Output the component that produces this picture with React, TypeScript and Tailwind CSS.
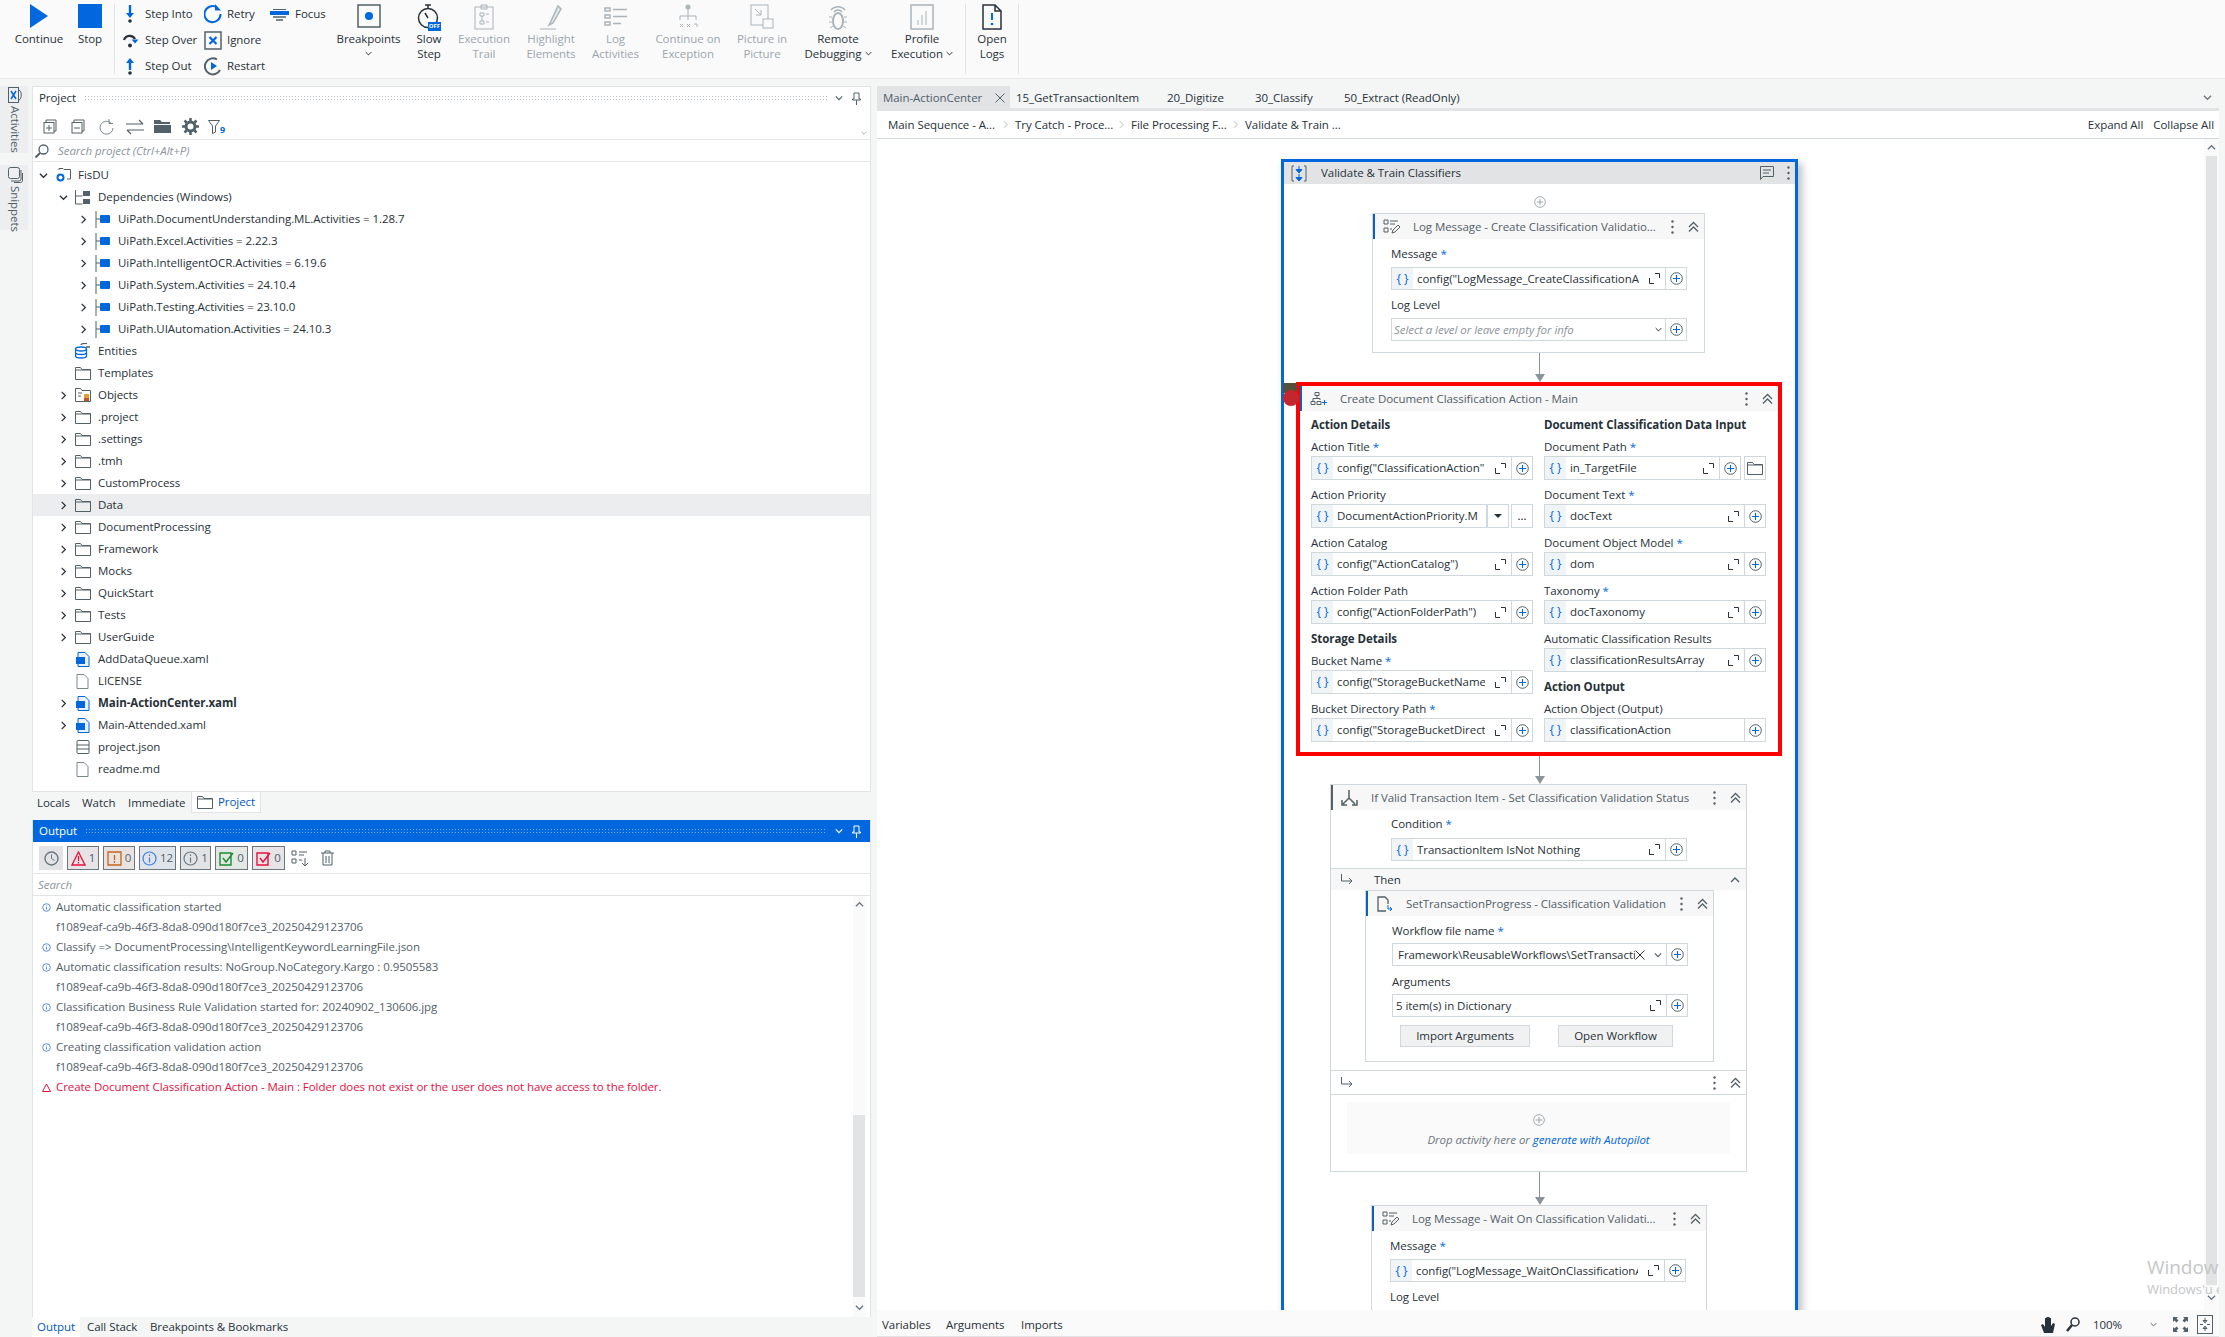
import type { ReactNode } from "react";

const DARK = "#273139";
const BLUE = "#0067df";
const DIS = "#a9b4bb";

function I({ w = 24, h = 24, vb = "0 0 24 24", children, className = "" }: { w?: number; h?: number; vb?: string; children: ReactNode; className?: string }) {
  return (
    <svg width={w} height={h} viewBox={vb} fill="none" className={"shrink-0 " + className}>
      {children}
    </svg>
  );
}

const Chevron = ({ dir = "down", size = 8, color = "#526069" }: { dir?: "down" | "right" | "up"; size?: number; color?: string }) => (
  <I w={size} h={size} vb="0 0 10 10">
    <path d={dir === "down" ? "M1 3l4 4 4-4" : dir === "up" ? "M1 7l4-4 4 4" : "M3 1l4 4-4 4"} stroke={color} strokeWidth="1.4" />
  </I>
);

const DoubleUp = () => (
  <I w={11} h={12} vb="0 0 11 12">
    <path d="M1 6l4.500-4.500L10 6M1 10.500L5.500 6l4.500 4.500" stroke="#526069" strokeWidth="1.3" />
  </I>
);

const Dots = () => (
  <I w={3} h={14} vb="0 0 3 14">
    <circle cx="1.500" cy="1.500" r="1.200" fill="#526069" />
    <circle cx="1.500" cy="7" r="1.200" fill="#526069" />
    <circle cx="1.500" cy="12.500" r="1.200" fill="#526069" />
  </I>
);

const PlusCircle = ({ size = 13, plus = BLUE, ring = "#526069" }: { size?: number; plus?: string; ring?: string }) => (
  <I w={size} h={size} vb="0 0 13 13">
    <circle cx="6.500" cy="6.500" r="5.800" stroke={ring} />
    <path d="M6.500 3v7M3 6.500h7" stroke={plus} strokeWidth="1.100" />
  </I>
);

const Expand = () => (
  <I w={11} h={11} vb="0 0 11 11">
    <path d="M.5 5v5.500H5M6 .5h4.500V5" stroke={DARK} />
  </I>
);

const Folder = ({ w = 16, h = 13 }: { w?: number; h?: number }) => (
  <I w={w} h={h} vb="0 0 16 13">
    <path d="M.5 12.500V.5h5l1.500 2h8.500v10z" stroke="#526069" />
    <path d="M.5 3h15" stroke="#526069" />
  </I>
);

const LogIcon = () => (
  <I w={17} h={15} vb="0 0 17 15">
    <path d="M1 1h4v4H1zM1 9h4v4H1zM7 2h8M7 5h5M7 10h2" stroke="#526069" />
    <path d="M9 14l1-3 5-5 2 2-5 5z" stroke="#526069" />
  </I>
);

/* Inputs */
function Braces() {
  return <span className="flex h-full w-[21px] shrink-0 items-center justify-center bg-[#f1f4f6] text-[12px] text-[#0067df]">{"{ }"}</span>;
}

function PlusCell() {
  return (
    <span className="flex h-full w-[21px] shrink-0 items-center justify-center border-l border-[#cfd8dd]">
      <PlusCircle />
    </span>
  );
}

function ExprInput({ value, expand = true, className = "" }: { value: string; expand?: boolean; className?: string }) {
  return (
    <div className={"flex h-[24px] items-center border border-[#cfd8dd] bg-white " + className}>
      <Braces />
      <span className="min-w-0 flex-1 overflow-hidden whitespace-nowrap pl-[4px] text-[#273139]">{value}</span>
      {expand && (
        <span className="flex w-[26px] shrink-0 justify-center pl-[5px]">
          <Expand />
        </span>
      )}
      <PlusCell />
    </div>
  );
}

function Label({ text, req }: { text: string; req?: boolean }) {
  return (
    <div className="flex h-[24px] items-end pb-[1px] leading-[16px] text-[#273139]">
      {text}
      {req && <span className="ml-[3px] text-[#0067df]">*</span>}
    </div>
  );
}

function Field({ label, req, value, expand }: { label: string; req?: boolean; value: string; expand?: boolean }) {
  return (
    <div>
      <Label text={label} req={req} />
      <ExprInput value={value} expand={expand} />
    </div>
  );
}

const Heading = ({ text, first }: { text: string; first?: boolean }) => (
  <div className={"font-bold leading-[16px] text-[#273139] " + (first ? "h-[21px] pt-[6px]" : "h-[22px] pt-[7px]")}>{text}</div>
);

function ActivityHeader({ icon, title, border = "border-[#0f5fbf]", dots = true }: { icon?: ReactNode; title: string; border?: string; dots?: boolean }) {
  return (
    <div className={"flex h-[25px] shrink-0 items-center border-l-2 bg-[#f7f7f7] " + border}>
      <span className="flex w-[32px] shrink-0 justify-center">{icon}</span>
      <span className="ml-[6px] min-w-0 flex-1 overflow-hidden whitespace-nowrap text-[#526069]">{title}</span>
      {dots && (
        <span className="flex w-[21px] shrink-0 justify-center">
          <Dots />
        </span>
      )}
      <span className="flex w-[21px] shrink-0 justify-center">
        <DoubleUp />
      </span>
    </div>
  );
}

function Connector({ h }: { h: string }) {
  return (
    <div className={"flex flex-col items-center " + h}>
      <div className="w-px flex-1 bg-[#8a949b]" />
      <div className="h-0 w-0 border-x-[5px] border-t-[8px] border-x-transparent border-t-[#8a949b]" />
    </div>
  );
}

/* Ribbon */
function Big({ w, icon, lines, dis, chevron }: { w: string; icon: ReactNode; lines: string[]; dis?: boolean; chevron?: "inline" | "below" }) {
  return (
    <div className={"flex shrink-0 flex-col items-center " + w + (dis ? " text-[#9aa6ad]" : " text-[#273139]")}>
      <div className="flex h-[31px] items-start pt-[4px]">{icon}</div>
      {lines.map((l, i) => (
        <div key={l} className="flex items-center gap-[3px] whitespace-nowrap leading-[15px]">
          {l}
          {chevron === "inline" && i === lines.length - 1 && <Chevron size={7} color={DARK} />}
        </div>
      ))}
      {chevron === "below" && (
        <div className="flex h-[15px] items-center">
          <Chevron size={7} color={DARK} />
        </div>
      )}
    </div>
  );
}

function Small({ icon, label, gap = "ml-[6px]", w = "w-[18px]" }: { icon: ReactNode; label: string; gap?: string; w?: string }) {
  return (
    <div className="flex h-[26px] items-center whitespace-nowrap text-[#273139]">
      <span className={"flex justify-center " + w}>{icon}</span>
      <span className={gap}>{label}</span>
    </div>
  );
}

const Sep = ({ ml = "" }: { ml?: string }) => <div className={"my-[4px] w-px shrink-0 bg-[#e1e3e5] " + ml} />;

function Ribbon() {
  const retry = (
    <I w={18} h={20} vb="0 0 18 20">
      <path d="M13 3.500A8 8 0 1 0 16.500 10" stroke={BLUE} strokeWidth="2" />
      <path d="M11 0v6.500h6z" fill={BLUE} />
    </I>
  );
  return (
    <div className="flex h-[79px] shrink-0 border-b border-[#e8eaeb] bg-[#fafafa] pl-[12px]">
      <Big
        w="w-[54px]"
        lines={["Continue"]}
        icon={
          <I w={18} h={24} vb="0 0 18 24">
            <path d="M0 0l18 12L0 24z" fill={BLUE} />
          </I>
        }
      />
      <Big w="w-[48px]" lines={["Stop"]} icon={<div className="h-[24px] w-[24px] bg-[#0067df]" />} />
      <Sep />
      <div className="flex w-[221px] shrink-0 pl-[6px] pt-[1px]">
        <div className="w-[83px]">
          <Small
            label="Step Into"
            icon={
              <I w={10} h={18} vb="0 0 10 18">
                <path d="M5 0v9" stroke={BLUE} strokeWidth="2.400" />
                <path d="M1 8h8l-4 5z" fill={BLUE} />
                <circle cx="5" cy="16" r="1.800" fill={DARK} />
              </I>
            }
          />
          <Small
            label="Step Over"
            icon={
              <I w={18} h={16} vb="0 0 18 16">
                <path d="M3 8a6 6 0 0 1 11-1" stroke={DARK} strokeWidth="2.200" />
                <path d="M10.500 7.500h7l-3.500 4z" fill={BLUE} />
                <circle cx="9" cy="13.500" r="2" fill={DARK} />
              </I>
            }
          />
          <Small
            label="Step Out"
            icon={
              <I w={10} h={18} vb="0 0 10 18">
                <path d="M5 5v8" stroke={BLUE} strokeWidth="2.400" />
                <path d="M1 6h8L5 1z" fill={BLUE} />
                <circle cx="5" cy="16" r="1.800" fill={DARK} />
              </I>
            }
          />
        </div>
        <div className="w-[66px]">
          <Small label="Retry" gap="ml-[5px]" icon={retry} />
          <Small
            label="Ignore"
            gap="ml-[5px]"
            icon={
              <I w={18} h={19} vb="0 0 18 19">
                <rect x="1" y="1" width="16" height="17" stroke="#526069" strokeWidth="1.500" />
                <path d="M5.500 6l7 7M12.500 6l-7 7" stroke={BLUE} strokeWidth="2.200" />
              </I>
            }
          />
          <Small
            label="Restart"
            gap="ml-[5px]"
            icon={
              <I w={18} h={20} vb="0 0 18 20">
                <path d="M13 3.500A8 8 0 1 0 16 14" stroke="#526069" strokeWidth="2" />
                <path d="M7 6l6 4-6 4z" fill={BLUE} />
              </I>
            }
          />
        </div>
        <div>
          <Small
            label="Focus"
            w="w-[19px]"
            icon={
              <I w={19} h={13} vb="0 0 19 13">
                <path d="M3 1.500h13" stroke="#526069" />
                <rect x="0" y="3" width="19" height="4" fill={BLUE} />
                <path d="M3 9h13M6 12h7" stroke="#526069" strokeWidth="1.500" />
              </I>
            }
          />
        </div>
      </div>
      <Big
        w="w-[65px]"
        lines={["Breakpoints"]}
        chevron="below"
        icon={
          <I w={24} h={24}>
            <rect x="1" y="1" width="22" height="22" stroke="#526069" strokeWidth="1.500" />
            <circle cx="12" cy="12" r="4" fill={BLUE} />
          </I>
        }
      />
      <Big
        w="w-[56px]"
        lines={["Slow", "Step"]}
        icon={
          <div className="relative h-[27px] w-[24px]">
            <I w={22} h={27} vb="0 0 22 27">
              <path d="M8 1h6M11 1v4" stroke={DARK} strokeWidth="1.500" />
              <circle cx="11" cy="14" r="9.500" stroke={DARK} strokeWidth="1.500" />
              <path d="M11 14l-3-5" stroke={DARK} strokeWidth="1.500" />
            </I>
            <span className="absolute bottom-0 right-0 bg-[#0067df] px-px text-[6px] font-bold leading-[9px] text-white">OFF</span>
          </div>
        }
      />
      <Big
        w="w-[54px]"
        dis
        lines={["Execution", "Trail"]}
        icon={
          <I w={20} h={26} vb="0 0 20 26">
            <rect x="1" y="3" width="18" height="22" stroke={DIS} />
            <path d="M7 1h6v4H7zM6 9h4v3H6zM6 17h4v3H6zM12 10h3M12 18h3M8 12v5" stroke={DIS} />
          </I>
        }
      />
      <Big
        w="w-[80px]"
        dis
        lines={["Highlight", "Elements"]}
        icon={
          <I w={26} h={26} vb="0 0 26 26">
            <path d="M13 17l-2 4 4-2L23 5l-3-3z" stroke={DIS} strokeWidth="1.500" fill="#e3e7e9" />
            <path d="M2 25h16" stroke={DIS} />
          </I>
        }
      />
      <Big
        w="w-[49px]"
        dis
        lines={["Log", "Activities"]}
        icon={
          <I w={24} h={24}>
            <path d="M1 4h5v3H1zM1 11h5v3H1zM1 18h5v3H1zM9 5.500h14M9 12.500h14M9 19.500h8" stroke={DIS} strokeWidth="1.500" />
          </I>
        }
      />
      <Big
        w="w-[96px]"
        dis
        lines={["Continue on", "Exception"]}
        icon={
          <I w={24} h={26} vb="0 0 24 26">
            <circle cx="12" cy="3" r="2.500" fill={DIS} />
            <path d="M12 5v11M4 12h16v4M4 12v4M4 20l3 3M7 20l-3 3M11 20l3 3M14 20l-3 3M18 20h3v3" stroke={DIS} />
          </I>
        }
      />
      <Big
        w="w-[52px]"
        dis
        lines={["Picture in", "Picture"]}
        icon={
          <I w={24} h={26} vb="0 0 24 26">
            <rect x="1" y="1" width="17" height="20" stroke={DIS} />
            <rect x="13" y="15" width="10" height="9" fill="#fafafa" stroke={DIS} />
            <path d="M5 5l6 6M11 6v5H6" stroke={DIS} />
          </I>
        }
      />
      <Big
        w="w-[100px]"
        lines={["Remote", "Debugging"]}
        chevron="inline"
        icon={
          <I w={20} h={27} vb="0 0 20 27">
            <path d="M3 6a9 9 0 0 1 14 0M6 8a5 5 0 0 1 8 0" stroke={DIS} strokeWidth="1.500" />
            <ellipse cx="10" cy="17" rx="5" ry="8" stroke={DIS} strokeWidth="2" />
            <path d="M1 13h3M16 13h3M1 18h3M16 18h3M2 24l3-2M18 24l-3-2" stroke={DIS} />
          </I>
        }
      />
      <Big
        w="w-[68px]"
        lines={["Profile", "Execution"]}
        chevron="inline"
        icon={
          <I w={24} h={26} vb="0 0 24 26">
            <rect x="1" y="1" width="22" height="24" stroke={DIS} strokeWidth="1.500" />
            <path d="M8 21v-5M12 21V11M16 21V7" stroke={DIS} />
          </I>
        }
      />
      <Sep ml="ml-[9px]" />
      <Big
        w="w-[52px]"
        lines={["Open", "Logs"]}
        icon={
          <I w={20} h={26} vb="0 0 20 26">
            <path d="M1 1h12l6 6v18H1zM13 1v6h6" stroke={DARK} strokeWidth="1.500" />
            <path d="M10 9v7" stroke={BLUE} strokeWidth="2" />
            <circle cx="10" cy="20" r="1.300" fill={BLUE} />
          </I>
        }
      />
      <Sep />
    </div>
  );
}

/* Left side */
const deps = [
  "UiPath.DocumentUnderstanding.ML.Activities = 1.28.7",
  "UiPath.Excel.Activities = 2.22.3",
  "UiPath.IntelligentOCR.Activities = 6.19.6",
  "UiPath.System.Activities = 24.10.4",
  "UiPath.Testing.Activities = 23.10.0",
  "UiPath.UIAutomation.Activities = 24.10.3",
];
const folders = [".project", ".settings", ".tmh", "CustomProcess", "Data", "DocumentProcessing", "Framework", "Mocks", "QuickStart", "Tests", "UserGuide"];

const Xaml = () => (
  <I w={14} h={15} vb="0 0 14 15">
    <path d="M2 .5h7l4 4v10H2z" fill="#e8f1fc" stroke="#0067df" />
    <rect x="0" y="5" width="9" height="7" fill={BLUE} />
  </I>
);

const FileIc = () => (
  <I w={13} h={15} vb="0 0 13 15">
    <path d="M1 .5h7l4 4v10H1z" stroke="#7b878f" />
  </I>
);

function TreeRow({ level, open, leaf, icon, text, bold, active }: { level: number; open?: boolean; leaf?: boolean; icon: ReactNode; text: string; bold?: boolean; active?: boolean }) {
  const indent = ["pl-[5px]", "pl-[25px]", "pl-[45px]"][level];
  return (
    <div className={"flex h-[22px] items-center whitespace-nowrap text-[#273139] " + indent + (active ? " bg-[#ebedee]" : "")}>
      <span className="flex w-[10px] justify-center">{!leaf && <Chevron dir={open ? "down" : "right"} size={9} color={DARK} />}</span>
      <span className="ml-[5px] flex w-[19px] justify-center">{icon}</span>
      <span className={"ml-[6px] " + (bold ? "font-bold" : "")}>{text}</span>
    </div>
  );
}

function PanelDots({ light }: { light?: boolean }) {
  return <div className={"mx-[8px] h-[6px] flex-1 bg-size-[3px_3px] " + (light ? "bg-[radial-gradient(#7fb3ef_0.7px,transparent_0.9px)]" : "bg-[radial-gradient(#b9c1c6_0.7px,transparent_0.9px)]")} />;
}

const Pin = ({ color = "#526069" }: { color?: string }) => (
  <I w={9} h={13} vb="0 0 9 13">
    <path d="M2 1h5v6h1.500v1h-8V7H2zM4.500 8v5" stroke={color} />
  </I>
);

function ProjectPanel() {
  return (
    <div className="flex h-[706px] shrink-0 flex-col border border-[#e1e3e5] bg-white">
      <div className="flex h-[24px] shrink-0 items-center pb-[2px] pl-[6px] pr-[9px] text-[#273139]">
        Project
        <PanelDots />
        <Chevron size={8} />
        <span className="ml-[9px]">
          <Pin />
        </span>
      </div>
      <div className="flex h-[29px] shrink-0 items-center border-b border-[#e1e3e5] pl-[10px] pt-[3px]">
        <I w={14} h={15} vb="0 0 14 15" className="mr-[14px]">
          <path d="M3 3V1h10v11h-2" stroke="#526069" />
          <rect x="1" y="3.500" width="10" height="10.500" stroke="#526069" />
          <path d="M6 6v6M3 9h6" stroke="#526069" />
        </I>
        <I w={14} h={15} vb="0 0 14 15" className="mr-[14px]">
          <path d="M3 3V1h10v11h-2" stroke="#526069" />
          <rect x="1" y="3.500" width="10" height="10.500" stroke="#526069" />
          <path d="M3 9h6" stroke="#526069" />
        </I>
        <I w={15} h={16} vb="0 0 15 16" className="mr-[12px]">
          <path d="M12 4A6.500 6.500 0 1 0 14 9" stroke="#7b878f" />
          <path d="M10 0v4.500h4" stroke="#7b878f" />
        </I>
        <I w={18} h={16} vb="0 0 18 16" className="mr-[10px]">
          <path d="M0 5h17M13 1l4 4M18 11H1M5 15l-4-4" stroke="#526069" strokeWidth="1.200" />
        </I>
        <I w={17} h={13} vb="0 0 17 13" className="mr-[11px]">
          <path d="M0 0h6l2 2h8v2H0zM0 5h17v8H0z" fill="#526069" />
        </I>
        <I w={17} h={17} vb="0 0 17 17" className="mr-[9px]">
          <circle cx="8.500" cy="8.500" r="4.500" stroke="#526069" strokeWidth="3" />
          <path d="M8.500 0v3M8.500 14v3M0 8.500h3M14 8.500h3M2.500 2.500l2 2M12.500 12.500l2 2M2.500 14.500l2-2M12.500 4.500l2-2" stroke="#526069" strokeWidth="2.500" />
        </I>
        <I w={12} h={14} vb="0 0 12 14">
          <path d="M.5.500h11L7.500 6v6l-3 1.500V6z" stroke="#526069" />
        </I>
        <span className="mt-[6px] text-[9px] font-bold leading-[10px] text-[#0067df]">9</span>
        <span className="ml-auto mr-[3px] mt-[12px]">
          <Chevron size={6} color="#9aa6ad" />
        </span>
      </div>
      <div className="flex h-[22px] shrink-0 items-center border-b border-[#e1e3e5] pl-[2px] italic text-[#8b959c]">
        <I w={14} h={14} vb="0 0 14 14" className="mr-[9px] scale-x-[-1]">
          <circle cx="5.500" cy="5.500" r="4.500" stroke="#526069" strokeWidth="1.300" />
          <path d="M9 9l4.500 4.500" stroke="#526069" strokeWidth="2" />
        </I>
        Search project (Ctrl+Alt+P)
      </div>
      <div className="flex-1 pt-[2px]">
        <TreeRow
          level={0}
          open
          text="FisDU"
          icon={
            <I w={16} h={15} vb="0 0 16 15">
              <path d="M4 2V.5h4l1 1h6.500V11H12" stroke="#526069" />
              <circle cx="5.500" cy="9.500" r="3" stroke={BLUE} strokeWidth="2" />
            </I>
          }
        />
        <TreeRow
          level={1}
          open
          text="Dependencies (Windows)"
          icon={
            <I w={16} h={15} vb="0 0 16 15">
              <path d="M.5 0v14h7M.5 6h7" stroke="#526069" />
              <rect x="8" y="1" width="7" height="5" fill="#526069" />
              <rect x="8" y="9" width="7" height="5" fill="#526069" />
            </I>
          }
        />
        {deps.map((d) => (
          <TreeRow
            key={d}
            level={2}
            text={d}
            icon={
              <I w={16} h={17} vb="0 0 16 17">
                <path d="M1 0v17M1 8h4" stroke="#526069" />
                <rect x="5" y="4" width="10" height="8" rx="1" fill={BLUE} />
              </I>
            }
          />
        ))}
        <TreeRow
          level={1}
          leaf
          text="Entities"
          icon={
            <I w={16} h={16} vb="0 0 16 16">
              <ellipse cx="6" cy="6" rx="5.500" ry="2" stroke={BLUE} strokeWidth="1.300" />
              <path d="M.5 6v7c0 1 2.500 2 5.500 2s5.500-1 5.500-2V6M.5 9.500c0 1 2.500 2 5.500 2s5.500-1 5.500-2" stroke={BLUE} strokeWidth="1.300" />
              <path d="M6 2c0-1 3-2 6-1.500M11 4h4" stroke="#526069" strokeWidth="1.300" />
            </I>
          }
        />
        <TreeRow level={1} leaf text="Templates" icon={<Folder />} />
        <TreeRow
          level={1}
          text="Objects"
          icon={
            <I w={16} h={14} vb="0 0 16 14">
              <path d="M.5 13.500V.5h5l1.500 2h8.500v11z" stroke="#526069" />
              <path d="M3 5h4M3 8h3" stroke="#526069" />
              <rect x="9" y="6" width="5" height="4" fill="#e0a030" />
              <rect x="9" y="10" width="5" height="3" fill="#c0562a" />
            </I>
          }
        />
        {folders.map((f) => (
          <TreeRow key={f} level={1} text={f} icon={<Folder />} active={f === "Data"} />
        ))}
        <TreeRow level={1} leaf text="AddDataQueue.xaml" icon={<Xaml />} />
        <TreeRow level={1} leaf text="LICENSE" icon={<FileIc />} />
        <TreeRow level={1} text="Main-ActionCenter.xaml" bold icon={<Xaml />} />
        <TreeRow level={1} text="Main-Attended.xaml" icon={<Xaml />} />
        <TreeRow
          level={1}
          leaf
          text="project.json"
          icon={
            <I w={14} h={14} vb="0 0 14 14">
              <rect x="1" y=".5" width="12" height="13" rx="1" stroke="#526069" />
              <path d="M1 5h12M1 9h12" stroke="#526069" />
            </I>
          }
        />
        <TreeRow level={1} leaf text="readme.md" icon={<FileIc />} />
      </div>
    </div>
  );
}

function CountBtn({ count, w, color, bg = "bg-[#dfe3ea]", kind }: { count: string; w: string; color: string; bg?: string; kind: "tri" | "sq" | "i" | "chk" }) {
  return (
    <div className={"mr-[4px] flex h-[24px] items-center justify-center gap-[3px] border border-[#6b7780] text-[#526069] " + w + " " + bg}>
      <I w={15} h={15} vb="0 0 15 15">
        {kind === "tri" && <path d="M7.500 1L14 14H1zM7.500 5v5M7.500 11v1.500" stroke={color} strokeWidth="1.300" />}
        {kind === "sq" && <path d="M1 1h13v13H1zM7.500 4v5M7.500 10v2" stroke={color} strokeWidth="1.300" />}
        {kind === "i" && (
          <g stroke={color} strokeWidth="1.200">
            <circle cx="7.500" cy="7.500" r="6.500" />
            <path d="M7.500 3.500v1.500M7.500 6.500v5" />
          </g>
        )}
        {kind === "chk" && <path d="M1 2h11v12H1zM4 7l3 4 7-9" stroke={color} strokeWidth="1.400" />}
      </I>
      {count}
    </div>
  );
}

const InfoDot = () => (
  <I w={9} h={9} vb="0 0 9 9">
    <circle cx="4.500" cy="4.500" r="3.800" stroke="#5b8fd6" />
    <path d="M4.500 2.500v.8M4.500 4v2.500" stroke="#5b8fd6" />
  </I>
);

const ID = "f1089eaf-ca9b-46f3-8da8-090d180f7ce3_20250429123706";
const logs: [string, boolean][] = [
  ["Automatic classification started", true],
  [ID, false],
  ["Classify => DocumentProcessing\\IntelligentKeywordLearningFile.json", true],
  ["Automatic classification results: NoGroup.NoCategory.Kargo : 0.9505583", true],
  [ID, false],
  ["Classification Business Rule Validation started for: 20240902_130606.jpg", true],
  [ID, false],
  ["Creating classification validation action", true],
  [ID, false],
];

function OutputPanel() {
  return (
    <div className="flex h-[497px] shrink-0 flex-col border-x border-[#e1e3e5] bg-white">
      <div className="flex h-[22px] shrink-0 items-center bg-[#0067df] pl-[6px] pr-[9px] text-white">
        Output
        <PanelDots light />
        <Chevron size={8} color="#ffffff" />
        <span className="ml-[9px]">
          <Pin color="#ffffff" />
        </span>
      </div>
      <div className="flex h-[32px] shrink-0 items-center border-b border-[#e1e3e5] pl-[6px] pt-[1px]">
        <div className="mr-[4px] flex h-[24px] w-[24px] items-center justify-center bg-[#e1e3e5]">
          <I w={15} h={15} vb="0 0 15 15">
            <circle cx="7.500" cy="7.500" r="6.500" stroke="#6b7780" strokeWidth="1.400" />
            <path d="M7.500 3.500v4l3 2" stroke="#6b7780" />
          </I>
        </div>
        <CountBtn w="w-[32px]" count="1" color="#e6103f" bg="bg-[#e8e3e6]" kind="tri" />
        <CountBtn w="w-[32px]" count="0" color="#c8641e" bg="bg-[#e8e3e0]" kind="sq" />
        <CountBtn w="w-[37px]" count="12" color="#3d7fe0" kind="i" />
        <CountBtn w="w-[31px]" count="1" color="#6b7780" bg="bg-[#e1e3e5]" kind="i" />
        <CountBtn w="w-[33px]" count="0" color="#1b8a2f" bg="bg-[#e3e8e4]" kind="chk" />
        <CountBtn w="w-[33px]" count="0" color="#e6103f" bg="bg-[#e8e3e6]" kind="chk" />
        <I w={17} h={17} vb="0 0 17 17" className="ml-[2px]">
          <path d="M1 1h4v4H1zM1 9h4v4H1zM8 2h8M8 5h5M8 10h3M14 8v8M11 13l3 3 3-3" stroke="#526069" />
        </I>
        <I w={13} h={16} vb="0 0 13 16" className="ml-[13px]">
          <path d="M0 3h13M4 3V1h5v2M2 3v12h9V3M5 6v7M8 6v7" stroke="#526069" />
        </I>
      </div>
      <div className="flex h-[22px] shrink-0 items-center border-b border-[#e1e3e5] pl-[5px] italic text-[#8b959c]">Search</div>
      <div className="flex min-h-0 flex-1">
        <div className="flex-1 pl-[9px] pt-[1px] leading-[20px] text-[#526069]">
          {logs.map(([t, icon], i) => (
            <div key={i} className="flex h-[20px] items-center whitespace-nowrap">
              <span className="flex w-[14px] shrink-0">{icon && <InfoDot />}</span>
              {t}
            </div>
          ))}
          <div className="flex h-[20px] items-center whitespace-nowrap text-[#e6103f]">
            <span className="flex w-[14px] shrink-0">
              <I w={9} h={9} vb="0 0 9 9">
                <path d="M4.500 1L8.500 8.500H.5z" stroke="#e6103f" />
              </I>
            </span>
            Create Document Classification Action - Main : Folder does not exist or the user does not have access to the folder.
          </div>
        </div>
        <div className="flex w-[13px] shrink-0 flex-col items-center bg-[#fafafa] pr-px">
          <div className="flex h-[18px] items-center">
            <Chevron dir="up" size={9} color="#6b7780" />
          </div>
          <div className="mt-[201px] h-[183px] w-full bg-[#e1e3e5]" />
          <div className="flex h-[20px] items-center">
            <Chevron size={9} color="#6b7780" />
          </div>
        </div>
        <div className="w-[4px] shrink-0" />
      </div>
    </div>
  );
}

/* Designer */
function RedActivity() {
  return (
    <div className="relative ml-[12px] w-[486px] border-4 border-[#ff0000]">
      <div className="absolute -left-[17px] -top-[3px] h-[10px] w-[14px] bg-[#54503a]" />
      <div className="absolute -left-[17px] top-[4px] h-[16px] w-[16px] rounded-full bg-[#c4262e]" />
      <ActivityHeader
        title="Create Document Classification Action - Main"
        icon={
          <I w={17} h={14} vb="0 0 17 14">
            <path d="M5 .5h4v3H5zM1 9.500h4v3H1zM7 9.500h4v3H7zM7 3.500v3M3 9V6.500h7V8" stroke="#526069" />
            <path d="M14.500 8v5M12 10.500h5" stroke={BLUE} />
          </I>
        }
      />
      <div className="flex gap-[11px] pb-[10px] pl-[11px] pr-[12px]">
        <div className="w-[222px]">
          <Heading text="Action Details" first />
          <Field label="Action Title" req value={'config("ClassificationAction"'} />
          <div>
            <Label text="Action Priority" />
            <div className="flex h-[24px] items-center">
              <div className="flex h-full w-[176px] items-center border border-[#cfd8dd]">
                <Braces />
                <span className="mr-[8px] min-w-0 flex-1 overflow-hidden whitespace-nowrap pl-[4px] text-[#273139]">DocumentActionPriority.Medium</span>
              </div>
              <div className="flex h-full w-[22px] items-center justify-center border border-[#cfd8dd]">
                <div className="h-0 w-0 border-x-[4px] border-t-[4px] border-x-transparent border-t-[#273139]" />
              </div>
              <div className="ml-[2px] flex h-full flex-1 items-center justify-center border border-[#cfd8dd] leading-none">...</div>
            </div>
          </div>
          <Field label="Action Catalog" value={'config("ActionCatalog")'} />
          <Field label="Action Folder Path" value={'config("ActionFolderPath")'} />
          <Heading text="Storage Details" />
          <Field label="Bucket Name" req value={'config("StorageBucketName")'} />
          <Field label="Bucket Directory Path" req value={'config("StorageBucketDirectory")'} />
        </div>
        <div className="w-[222px]">
          <Heading text="Document Classification Data Input" first />
          <div>
            <Label text="Document Path" req />
            <div className="flex h-[24px] gap-[3px]">
              <ExprInput value="in_TargetFile" className="flex-1" />
              <div className="flex w-[22px] items-center justify-center border border-[#cfd8dd]">
                <Folder />
              </div>
            </div>
          </div>
          <Field label="Document Text" req value="docText" />
          <Field label="Document Object Model" req value="dom" />
          <Field label="Taxonomy" req value="docTaxonomy" />
          <Field label="Automatic Classification Results" value="classificationResultsArray" />
          <Heading text="Action Output" />
          <Field label="Action Object (Output)" value="classificationAction" expand={false} />
        </div>
      </div>
    </div>
  );
}

function LogCard({ title, msg, ml, w, h, select }: { title: string; msg: string; ml: string; w: string; h?: string; select?: boolean }) {
  return (
    <div className={"shrink-0 border border-[#cfd8dd] " + ml + " " + w + " " + (h ?? "")}>
      <ActivityHeader title={title} icon={<LogIcon />} />
      <div className="pl-[18px]">
        <div className="flex h-[28px] items-start pt-[7px] leading-[16px] text-[#273139]">
          Message<span className="ml-[3px] text-[#0067df]">*</span>
        </div>
        <ExprInput value={msg} className="h-[23px]! w-[296px]" />
        <div className="h-[28px] pt-[7px] leading-[16px] text-[#273139]">Log Level</div>
        {select && (
          <div className="flex h-[23px] w-[296px] items-center border border-[#cfd8dd] pl-[2px] italic text-[#8b959c]">
            <span className="flex-1">Select a level or leave empty for info</span>
            <span className="mr-[3px]">
              <Chevron size={7} color={DARK} />
            </span>
            <PlusCell />
          </div>
        )}
        {!select && <div className="h-px w-[296px] bg-[#cfd8dd]" />}
      </div>
    </div>
  );
}

function IfActivity() {
  return (
    <div className="ml-[46px] flex h-[388px] w-[417px] shrink-0 flex-col border border-[#cfd8dd]">
      <ActivityHeader
        title="If Valid Transaction Item - Set Classification Validation Status"
        border="border-[#526069]"
        icon={
          <I w={17} h={16} vb="0 0 17 16">
            <path d="M8 0v8L2 14M8 8l6 6M1 10v5h5M16 10v5h-5" stroke="#526069" strokeWidth="1.500" />
          </I>
        }
      />
      <div className="h-[59px] shrink-0 border-b border-[#cfd8dd] pl-[60px]">
        <div className="flex h-[28px] items-center leading-[16px] text-[#273139]">
          Condition<span className="ml-[3px] text-[#0067df]">*</span>
        </div>
        <ExprInput value="TransactionItem IsNot Nothing" className="h-[23px]! w-[296px]" />
      </div>
      <div className="flex h-[21px] shrink-0 items-center bg-[#f7f7f7] pl-[10px] pr-[6px] text-[#273139]">
        <I w={12} h={11} vb="0 0 12 11">
          <path d="M.5 0v7H11M8 4l3 3-3 3" stroke="#526069" />
        </I>
        <span className="ml-[21px] flex-1">Then</span>
        <Chevron dir="up" size={10} />
      </div>
      <div className="ml-[34px] h-[172px] w-[349px] shrink-0 border border-[#cfd8dd]">
        <ActivityHeader
          title="SetTransactionProgress - Classification Validation"
          icon={
            <I w={15} h={16} vb="0 0 15 16">
              <path d="M9 15H1V1h7l3 3v4" stroke="#526069" strokeWidth="1.300" />
              <path d="M11 9v4h4M13 11l2 2-2 2" stroke={BLUE} />
            </I>
          }
        />
        <div className="pl-[26px]">
          <div className="flex h-[27px] items-end pb-[4px] leading-[16px] text-[#273139]">
            Workflow file name<span className="ml-[3px] text-[#0067df]">*</span>
          </div>
          <div className="flex h-[23px] w-[296px] items-center border border-[#cfd8dd]">
            <span className="w-[242px] overflow-hidden whitespace-nowrap pl-[5px] text-[#273139]">Framework\ReusableWorkflows\SetTransactionProgress.xaml</span>
            <I w={10} h={10} vb="0 0 10 10">
              <path d="M.5.5l9 9M9.500.5l-9 9" stroke={DARK} />
            </I>
            <span className="ml-[9px]">
              <Chevron size={8} />
            </span>
            <span className="ml-auto h-full">
              <PlusCell />
            </span>
          </div>
          <div className="flex h-[28px] items-end pb-[4px] leading-[16px] text-[#273139]">Arguments</div>
          <div className="flex h-[23px] w-[296px] items-center border border-[#cfd8dd] pl-[3px] text-[#273139]">
            <span className="flex-1">5 item(s) in Dictionary</span>
            <Expand />
            <span className="ml-[5px] h-full">
              <PlusCell />
            </span>
          </div>
          <div className="mt-[8px] flex gap-[28px] pl-[8px]">
            <div className="flex h-[22px] w-[130px] items-center justify-center border border-[#cfd8dd] bg-[#f1f1f2] text-[#273139]">Import Arguments</div>
            <div className="flex h-[22px] w-[115px] items-center justify-center border border-[#cfd8dd] bg-[#f1f1f2] text-[#273139]">Open Workflow</div>
          </div>
        </div>
      </div>
      <div className="mt-[8px] flex h-[25px] shrink-0 items-center border-y border-[#cfd8dd] pl-[10px]">
        <I w={12} h={11} vb="0 0 12 11">
          <path d="M.5 0v7H11M8 4l3 3-3 3" stroke="#526069" />
        </I>
        <span className="ml-auto flex w-[21px] justify-center">
          <Dots />
        </span>
        <span className="flex w-[21px] justify-center">
          <DoubleUp />
        </span>
      </div>
      <div className="mx-[16px] mt-[7px] flex h-[52px] flex-col items-center bg-[#fafafa] pt-[12px]">
        <PlusCircle size={12} plus="#9aa6ad" ring="#9aa6ad" />
        <div className="mt-[5px] italic text-[#6b7780]">
          Drop activity here or <span className="text-[#0067df]">generate with Autopilot</span>
        </div>
      </div>
    </div>
  );
}

function Designer() {
  return (
    <div className="relative flex min-h-0 flex-1 overflow-hidden bg-white">
      <div className="flex-1 overflow-hidden pl-[404px] pt-[20px]">
        <div className="h-[1200px] w-[517px] border-x-[3px] border-t-[3px] border-[#0067df] shadow-[4px_4px_8px_rgba(0,0,0,0.25)]">
          <div className="flex h-[22px] items-center bg-[#e1e3e5] pl-[7px] pr-[5px] text-[#273139]">
            <I w={16} h={17} vb="0 0 16 17">
              <path d="M3 1H1v15h2M13 1h2v15h-2" stroke="#526069" />
              <path d="M8 1v4M5 4.500h6L8 8zM8 9v4M5 12.500h6L8 16z" stroke={BLUE} fill={BLUE} />
            </I>
            <span className="ml-[14px] flex-1">Validate &amp; Train Classifiers</span>
            <I w={14} h={14} vb="0 0 14 14" className="mr-[13px]">
              <path d="M.5.500h13v10H3l-2.500 3zM3 4h8M3 7h6" stroke="#526069" />
            </I>
            <Dots />
          </div>
          <div className="flex h-[29px] justify-center pt-[12px]">
            <PlusCircle size={12} plus="#9aa6ad" ring="#9aa6ad" />
          </div>
          <LogCard
            ml="ml-[88px]"
            w="w-[333px]"
            title="Log Message - Create Classification Validatio..."
            msg={'config("LogMessage_CreateClassificationAction")'}
            select
            h="h-[140px]"
          />
          <Connector h="h-[29px]" />
          <RedActivity />
          <Connector h="h-[28px]" />
          <IfActivity />
          <Connector h="h-[33px]" />
          <LogCard ml="ml-[87px]" w="w-[336px]" title="Log Message - Wait On Classification Validati..." msg={'config("LogMessage_WaitOnClassificationAction")'} />
        </div>
      </div>
      <div className="flex w-[15px] shrink-0 flex-col items-center bg-[#fafafa]">
        <div className="flex h-[17px] items-center">
          <Chevron dir="up" size={9} color="#6b7780" />
        </div>
        <div className="w-[11px] flex-1 bg-[#e1e3e5]" />
        <div className="flex h-[25px] items-center">
          <Chevron size={9} color="#6b7780" />
        </div>
      </div>
      <div className="pointer-events-none absolute left-[1270px] top-[1115px] whitespace-nowrap text-[#c4c6c8]">
        <div className="text-[19px] leading-[26px]">Windows</div>
        <div className="text-[13px] leading-[18px]">Windows&apos;u etkinleştirmek</div>
      </div>
    </div>
  );
}

function Main() {
  const tabs: [string, string][] = [
    ["15_GetTransactionItem", "w-[151px]"],
    ["20_Digitize", "w-[88px]"],
    ["30_Classify", "w-[89px]"],
    ["50_Extract (ReadOnly)", "w-[160px]"],
  ];
  const crumbs: [string, string][] = [
    ["Main Sequence - A...", "w-[127px]"],
    ["Try Catch - Proce...", "w-[116px]"],
    ["File Processing F...", "w-[114px]"],
  ];
  return (
    <div className="flex h-[1258px] w-[1342px] shrink-0 flex-col pt-[7px]">
      <div className="flex h-[22px] shrink-0 items-center pr-[6px] text-[#273139]">
        <div className="flex h-full w-[133px] items-center bg-[#e1e3e5] pl-[6px] pt-[1px] text-[#526069]">
          <span className="flex-1">Main-ActionCenter</span>
          <I w={10} h={10} vb="0 0 10 10" className="mr-[5px]">
            <path d="M.5.500l9 9M9.500.500l-9 9" stroke="#526069" />
          </I>
        </div>
        {tabs.map(([t, w]) => (
          <div key={t} className={"whitespace-nowrap pl-[6px] pt-[1px] " + w}>
            {t}
          </div>
        ))}
        <span className="ml-auto mr-[1px]">
          <Chevron size={9} color="#6b7780" />
        </span>
      </div>
      <div className="flex h-[31px] shrink-0 items-center border-t-[3px] border-b border-t-[#e1e3e5] border-b-[#cfd8dd] bg-white pl-[11px] pr-[5px] text-[#273139]">
        {crumbs.map(([t, w]) => (
          <div key={t} className={"flex shrink-0 items-center justify-between whitespace-nowrap pr-[5px] " + w}>
            {t}
            <Chevron dir="right" size={9} color="#cfd8dd" />
          </div>
        ))}
        <span className="whitespace-nowrap">Validate &amp; Train ...</span>
        <span className="ml-auto whitespace-nowrap">Expand All</span>
        <span className="ml-[10px] whitespace-nowrap">Collapse All</span>
      </div>
      <Designer />
      <div className="flex h-[27px] shrink-0 items-center border-b border-[#e1e3e5] bg-[#fafafa] pl-[5px] pr-[6px] pt-[3px] text-[#273139]">
        <span className="w-[64px]">Variables</span>
        <span className="w-[75px]">Arguments</span>
        <span>Imports</span>
        <I w={15} h={17} vb="0 0 15 17" className="ml-auto">
          <path d="M3 17L0 9l2-1 2 3V2h1.500v6V1H7v7V1h1.500v7V2H10v8l2-3 2 1-2 9z" fill={DARK} />
        </I>
        <I w={14} h={15} vb="0 0 14 15" className="ml-[10px]">
          <circle cx="9" cy="5" r="4" stroke={DARK} strokeWidth="1.500" />
          <path d="M6 8l-5 6" stroke={DARK} strokeWidth="2.500" />
        </I>
        <span className="ml-[13px] w-[49px]">100%</span>
        <span className="ml-[8px]">
          <Chevron size={7} />
        </span>
        <I w={15} h={15} vb="0 0 15 15" className="ml-[16px]">
          <path d="M0 0h5L3.500 1.500l2 2-2 2-2-2L0 5zM15 0v5l-1.500-1.500-2 2-2-2 2-2L10 0zM0 15v-5l1.500 1.500 2-2 2 2-2 2L5 15zM15 15h-5l1.500-1.500-2-2 2-2 2 2L15 10z" fill="#526069" />
        </I>
        <I w={16} h={19} vb="0 0 16 19" className="ml-[9px]">
          <rect x=".5" y=".5" width="15" height="18" stroke="#526069" />
          <path d="M8 3v4M6 5.500h4L8 8zM8 16v-4M6 13.500h4L8 11zM3 9.500h3M10 9.500h3" stroke="#526069" />
        </I>
      </div>
    </div>
  );
}

export default function App() {
  return (
    <div className="flex h-[1337px] w-[2225px] flex-col overflow-hidden bg-[#f4f6f6] font-['Open_Sans',sans-serif] text-[11.5px] tracking-[-0.005em]">
      <Ribbon />
      <div className="flex min-h-0 flex-1">
        <div className="flex w-[32px] shrink-0 flex-col pt-[7px] text-[#526069]">
          <div className="flex h-[67px] w-[28px] flex-col items-center bg-[#eceeef] pl-[3px]">
            <I w={15} h={16} vb="0 0 15 16" className="mt-[1px]">
              <rect x=".5" y=".5" width="10" height="15" stroke="#526069" />
              <path d="M3 4l5 8M8 4l-5 8" stroke={BLUE} strokeWidth="1.500" />
              <path d="M11 3c3 1 3 9 0 10" stroke="#526069" />
            </I>
            <span className="mt-[3px] [writing-mode:vertical-rl]">Activities</span>
          </div>
          <div className="mt-[12px] flex h-[65px] w-[28px] flex-col items-center bg-[#eceeef] pl-[3px]">
            <I w={15} h={16} vb="0 0 15 16" className="mt-[2px]">
              <rect x=".5" y=".5" width="11" height="11" rx="2" stroke="#526069" />
              <path d="M13 3v9a2 2 0 0 1-2 2H3M14.500 6v7a2 2 0 0 1-2 2.500H6" stroke="#526069" />
            </I>
            <span className="mt-[3px] [writing-mode:vertical-rl]">Snippets</span>
          </div>
        </div>
        <div className="flex w-[839px] shrink-0 flex-col pt-[7px]">
          <ProjectPanel />
          <div className="flex h-[21px] shrink-0 items-center text-[#273139]">
            <span className="ml-[5px] w-[45px]">Locals</span>
            <span className="w-[46px]">Watch</span>
            <span className="w-[63px]">Immediate</span>
            <div className="flex h-full items-center gap-[5px] border-x border-b border-[#e1e3e5] bg-white px-[5px] text-[#0056c0]">
              <Folder />
              Project
            </div>
          </div>
          <div className="h-[7px] shrink-0" />
          <OutputPanel />
          <div className="flex h-[20px] shrink-0 items-center text-[#273139]">
            <span className="flex h-full w-[48px] items-center bg-white pl-[5px] text-[#0056c0]">Output</span>
            <span className="ml-[7px] w-[63px]">Call Stack</span>
            <span>Breakpoints &amp; Bookmarks</span>
          </div>
        </div>
        <div className="w-[6px] shrink-0" />
        <Main />
      </div>
    </div>
  );
}
